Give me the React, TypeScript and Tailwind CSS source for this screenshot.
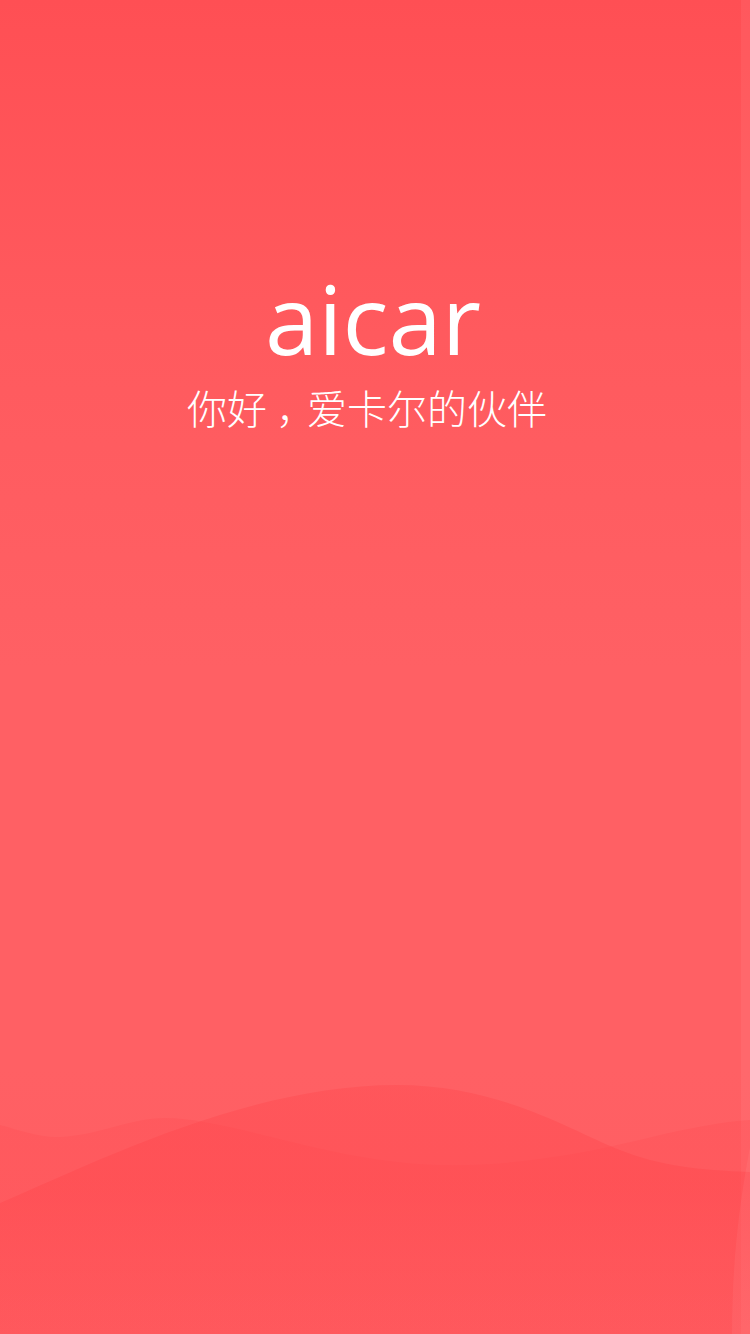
import React from "react";

export default function App() {
  return (
    <div className="relative w-[750px] h-[1334px] overflow-hidden bg-[linear-gradient(180deg,#ff4f54_0%,#ff5a5e_25%,#ff6064_50%,#ff6064_80%,#ff5d61_100%)]">
      <div className="absolute top-0 right-0 w-[9px] h-full bg-white/[0.05]" />
      <svg
        className="absolute left-0 bottom-0"
        width="750"
        height="284"
        viewBox="0 0 750 284"
      >
        <defs>
          <linearGradient id="ga" x1="0" y1="0" x2="0" y2="1">
            <stop offset="0" stopColor="#ff4a50" stopOpacity="0.28" />
            <stop offset="1" stopColor="#ff4a50" stopOpacity="0.12" />
          </linearGradient>
          <linearGradient id="gb" x1="0" y1="0" x2="0" y2="1">
            <stop offset="0" stopColor="#ff454b" stopOpacity="0.35" />
            <stop offset="0.4" stopColor="#ff454b" stopOpacity="0.4" />
            <stop offset="1" stopColor="#ff454b" stopOpacity="0.1" />
          </linearGradient>
        </defs>
        <path
          d="M0 75 C 20 80, 40 88, 60 87 C 100 85, 130 68, 165 68 C 230 68, 330 112, 440 115 C 520 117, 600 100, 660 85 C 700 76, 730 71, 750 70 V284 H0 Z"
          fill="url(#ga)"
        />
        <path
          d="M0 153 C 100 110, 250 35, 397 35 C 500 35, 570 80, 620 100 C 660 116, 700 120, 750 122 V284 H0 Z"
          fill="url(#gb)"
        />
        <path
          d="M750 97 C 742 140, 732 200, 732 284 H750 Z"
          fill="#ffffff"
          fillOpacity="0.05"
        />
      </svg>
      <div className="relative flex flex-col items-center pt-[270px] text-white">
        <div
          className="text-[96px] leading-[96px] pr-[4px]"
          style={{ fontFamily: '"Open Sans", "Noto Sans", sans-serif' }}
        >
          aicar
        </div>
        <div
          className="mt-[21px] pr-[16px] text-[40px] leading-[40px] font-light flex"
          style={{
            fontFamily: '"Noto Sans CJK SC", "Noto Sans", sans-serif',
          }}
        >
          <span>你好</span>
          <span className="pl-[9px] pr-[11px] [font-feature-settings:'halt']">
            ，
          </span>
          <span>爱卡尔的伙伴</span>
        </div>
      </div>
    </div>
  );
}
